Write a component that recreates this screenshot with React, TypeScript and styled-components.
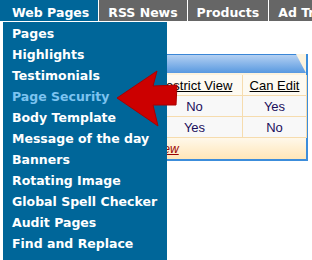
import styled, { createGlobalStyle } from 'styled-components';

const GlobalStyle = createGlobalStyle`
  html, body {
    margin: 0;
    padding: 0;
    background: #fff;
  }
  body {
    width: 312px;
    height: 260px;
    overflow: hidden;
    position: relative;
    font-family: Verdana, "DejaVu Sans", sans-serif;
  }
`;

const tabs = ['Web Pages', 'RSS News', 'Products', 'Ad Tracker'];

const menuItems = [
  'Pages',
  'Highlights',
  'Testimonials',
  'Page Security',
  'Body Template',
  'Message of the day',
  'Banners',
  'Rotating Image',
  'Global Spell Checker',
  'Audit Pages',
  'Find and Replace',
];

const rows = [
  { view: 'No', edit: 'Yes' },
  { view: 'Yes', edit: 'No' },
];

const App = () => {
  return (
    <>
      <GlobalStyle />
      <TabBar>
        {tabs.map((tab, i) => (
          <Tab key={tab} active={i === 0}>
            {tab}
          </Tab>
        ))}
      </TabBar>
      <Content>
        <Card>
          <CardHeader />
          <Table>
            <colgroup>
              <col style={{ width: 16 }} />
              <col style={{ width: 96 }} />
              <col style={{ width: 64 }} />
            </colgroup>
            <thead>
              <tr>
                <HeadCell />
                <HeadCell>
                  <HeadLink>Restrict View</HeadLink>
                </HeadCell>
                <HeadCell>
                  <HeadLink>Can Edit</HeadLink>
                </HeadCell>
              </tr>
            </thead>
            <tbody>
              {rows.map((row, i) => (
                <tr key={i}>
                  <Cell />
                  <Cell>{row.view}</Cell>
                  <Cell>{row.edit}</Cell>
                </tr>
              ))}
            </tbody>
          </Table>
          <CardFooter>
            <FooterLink>Add New</FooterLink>
          </CardFooter>
        </Card>
      </Content>
      <Dropdown>
        {menuItems.map(item => (
          <MenuItem key={item} current={item === 'Page Security'}>
            {item}
          </MenuItem>
        ))}
      </Dropdown>
      <Arrow width="80" height="64" viewBox="0 0 80 64">
        <polygon
          points="2,32 42,5 38,20 62,19 61,39 38,39 43,60"
          fill="#cc0000"
          stroke="#a80000"
          strokeWidth="1"
          strokeLinejoin="round"
        />
      </Arrow>
    </>
  );
};

export default App;

const TabBar = styled.div`
  display: flex;
  height: 21px;
  background: #666;
  border-bottom: 1px solid #fff;
  overflow: hidden;
  white-space: nowrap;
`;

const Tab = styled.div<{ active: boolean }>`
  flex: none;
  display: flex;
  align-items: center;
  padding: 3px 9px 0 ${props => (props.active ? '12px' : '9px')};
  background: ${props => (props.active ? '#006699' : '#666666')};
  border-left: ${props => (props.active ? 'none' : '1px solid #fff')};
  color: #fff;
  font-family: "DejaVu Sans", Verdana, sans-serif;
  font-weight: bold;
  font-size: 12.5px;
`;

const Content = styled.div`
  padding: 32px 0 0 130px;
`;

const Card = styled.div`
  width: 176px;
  border-right: 2px solid #3c8ddb;
  border-bottom: 2px solid #3c8ddb;
  background: #fdf3dd;
`;

const CardHeader = styled.div`
  height: 18px;
  border-top: 1px solid #3a86d6;
  background: linear-gradient(#b4d0f2, #5899e0);
  clip-path: polygon(0 0, 166px 0, 100% 100%, 0 100%);
  margin-bottom: 2px;
`;

const Table = styled.table`
  width: 176px;
  border-collapse: collapse;
  table-layout: fixed;
  font-family: "Liberation Sans", Arial, sans-serif;
  font-size: 13px;
`;

const HeadCell = styled.th`
  height: 20px;
  padding: 0;
  border: 1px solid #f6dcae;
  border-top: none;
  background: #fdfaf2;
  font-weight: normal;
  text-align: center;
`;

const HeadLink = styled.span`
  color: #000;
  text-decoration: underline;
  white-space: nowrap;
`;

const Cell = styled.td`
  height: 20px;
  padding: 0;
  border: 1px solid #f6dcae;
  background: #f8f8f8;
  color: #1a0f5c;
  text-align: center;
`;

const CardFooter = styled.div`
  height: 21px;
  display: flex;
  align-items: center;
  background: linear-gradient(#fff8ea, #ffe6b8);
  font-family: "Liberation Sans", Arial, sans-serif;
  font-size: 12px;
`;

const FooterLink = styled.span`
  color: #990000;
  font-style: italic;
  text-decoration: underline;
`;

const Dropdown = styled.div`
  position: absolute;
  left: 3px;
  top: 22px;
  width: 164px;
  height: 238px;
  padding-top: 1px;
  box-sizing: border-box;
  background: #006699;
`;

const MenuItem = styled.div<{ current: boolean }>`
  height: 21px;
  line-height: 21px;
  padding-left: 9px;
  color: ${props => (props.current ? '#7cc3f0' : '#fff')};
  font-family: "DejaVu Sans", Verdana, sans-serif;
  font-weight: bold;
  font-size: 12.5px;
  white-space: nowrap;
`;

const Arrow = styled.svg`
  position: absolute;
  left: 115px;
  top: 66px;
`;
